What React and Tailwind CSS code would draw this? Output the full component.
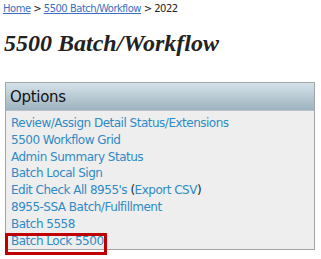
import React from "react";

const links = [
  "Review/Assign Detail Status/Extensions",
  "5500 Workflow Grid",
  "Admin Summary Status",
  "Batch Local Sign",
];

function App() {
  return (
    <div className="relative w-[321px] h-[259px] bg-white font-['DejaVu_Sans',sans-serif]">
      {/* breadcrumb */}
      <div className="pt-[2px] pl-[3px] text-[10px] leading-[14px] tracking-[-0.5px] text-[#222]">
        <a className="text-[#3a6fc4] underline">Home</a>
        <span> &gt; </span>
        <a className="text-[#3a6fc4] underline">5500 Batch/Workflow</a>
        <span> &gt; 2022</span>
      </div>

      <h1 className="mt-[12px] ml-[4px] font-['Liberation_Serif',serif] text-[24px] leading-[30px] font-bold italic text-[#222]">
        5500 Batch/Workflow
      </h1>

      <div className="mt-[24px] ml-[5px] w-[310px] border border-[#a5a5a5] bg-[#eeeeee]">
        <div className="h-[28px] border-b border-[#b9c2c7] bg-gradient-to-b from-[#d6e2ea] to-[#9db3bf] pl-[4px] text-[15px] leading-[28px] tracking-[-0.3px] text-[#111]">
          Options
        </div>
        <div className="pt-[4px] pl-[5px] text-[12px] leading-[16.8px] tracking-[-0.5px] text-[#2f8ac6]">
          {links.map((l) => (
            <div key={l}>{l}</div>
          ))}
          <div>
            Edit Check All 8955's <span className="text-[#222]">(</span>Export CSV
            <span className="text-[#222]">)</span>
          </div>
          <div>8955-SSA Batch/Fulfillment</div>
          <div>Batch 5558</div>
          <div className="relative">
            Batch Lock 5500
            <div className="absolute left-[-6px] top-0 w-[102px] h-[22px] border-[3px] border-[#c00000]" />
          </div>
        </div>
      </div>
    </div>
  );
}

export default App;
